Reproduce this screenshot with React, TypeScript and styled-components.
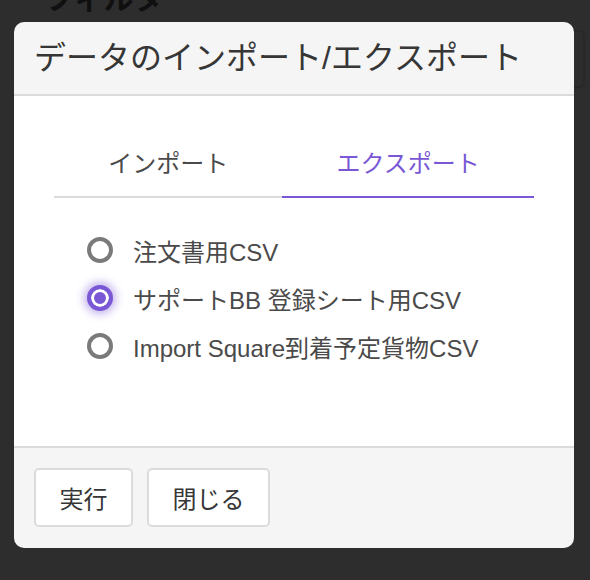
import { FC, useState } from "react";
import styled, { createGlobalStyle } from "styled-components";

const primary = "#7957d5";

const GlobalStyle = createGlobalStyle`
  html, body {
    margin: 0;
    padding: 0;
    background: #ffffff;
    font-family: "Liberation Sans", "Noto Sans CJK JP", sans-serif;
    color: #4a4a4a;
  }
  * { box-sizing: border-box; }
`;

const Page = styled.div`
  padding: 0 5px 0 44px;
  height: 580px;
  overflow: hidden;
`;

const PageTitle = styled.h2`
  margin: -19px 0 13px;
  font-size: 30px;
  line-height: 36px;
  font-weight: 700;
  color: #363636;
`;

const FilterBox = styled.div`
  height: 58px;
  border: 2px solid #dbdbdb;
  border-radius: 5px;
`;

const Overlay = styled.div`
  position: fixed;
  inset: 0;
  background: rgba(10, 10, 10, 0.86);
`;

const Modal = styled.div`
  position: fixed;
  top: 22px;
  left: 14px;
  width: 560px;
  display: flex;
  flex-direction: column;
  border-radius: 10px;
  overflow: hidden;
`;

const Header = styled.header`
  height: 74px;
  display: flex;
  align-items: center;
  padding: 0 20px;
  background: #f5f5f5;
  border-bottom: 2px solid #dbdbdb;
`;

const Title = styled.p`
  margin: 0;
  font-size: 32px;
  line-height: 1;
  color: #363636;
`;

const Body = styled.section`
  height: 350px;
  padding: 38px 40px 0;
  background: #ffffff;
`;

const Tabs = styled.ul`
  display: flex;
  margin: 0;
  padding: 0;
  list-style: none;
`;

const Tab = styled.li<{ $active: boolean }>`
  flex: 1 0 auto;
  text-align: center;
  padding: 12px 16px 14px;
  font-size: 24px;
  line-height: 36px;
  cursor: pointer;
  color: ${(p) => (p.$active ? primary : "#4a4a4a")};
  border-bottom: 2px solid ${(p) => (p.$active ? primary : "#dbdbdb")};
`;

const Options = styled.div`
  display: flex;
  flex-direction: column;
  margin-top: 28px;
  padding-left: 33px;
`;

const Option = styled.label`
  display: flex;
  align-items: center;
  gap: 20px;
  height: 48px;
  font-size: 24px;
  color: #4a4a4a;
  cursor: pointer;
`;

const RadioMark = styled.span<{ $checked: boolean }>`
  width: 26px;
  height: 26px;
  flex: none;
  border-radius: 50%;
  border: 4px solid ${(p) => (p.$checked ? primary : "#7a7a7a")};
  background: ${(p) => (p.$checked ? primary : "#ffffff")};
  box-shadow: ${(p) =>
    p.$checked
      ? `inset 0 0 0 3px #ffffff, 0 0 8px 3px rgba(121, 87, 213, 0.45)`
      : "none"};
`;

const Footer = styled.footer`
  display: flex;
  gap: 14px;
  padding: 20px 20px 21px;
  background: #f5f5f5;
  border-top: 2px solid #dbdbdb;
`;

const Button = styled.button`
  height: 59px;
  padding: 0 23.5px;
  font-family: inherit;
  font-size: 24px;
  color: #363636;
  background: #ffffff;
  border: 2px solid #dbdbdb;
  border-radius: 5px;
`;

const exportTypes = [
  "注文書用CSV",
  "サポートBB 登録シート用CSV",
  "Import Square到着予定貨物CSV",
];

const App: FC = () => {
  const [tab, setTab] = useState(1);
  const [selected, setSelected] = useState(1);

  return (
    <>
      <GlobalStyle />
      <Page>
        <PageTitle>フィルタ</PageTitle>
        <FilterBox />
      </Page>
      <Overlay />
      <Modal>
        <Header>
          <Title>データのインポート/エクスポート</Title>
        </Header>
        <Body>
          <Tabs>
            <Tab $active={tab === 0} onClick={() => setTab(0)}>インポート</Tab>
            <Tab $active={tab === 1} onClick={() => setTab(1)}>エクスポート</Tab>
          </Tabs>
          <Options>
            {exportTypes.map((label, i) => (
              <Option key={label} onClick={() => setSelected(i)}>
                <RadioMark $checked={selected === i} />
                {label}
              </Option>
            ))}
          </Options>
        </Body>
        <Footer>
          <Button>実行</Button>
          <Button>閉じる</Button>
        </Footer>
      </Modal>
    </>
  );
};

export default App;
